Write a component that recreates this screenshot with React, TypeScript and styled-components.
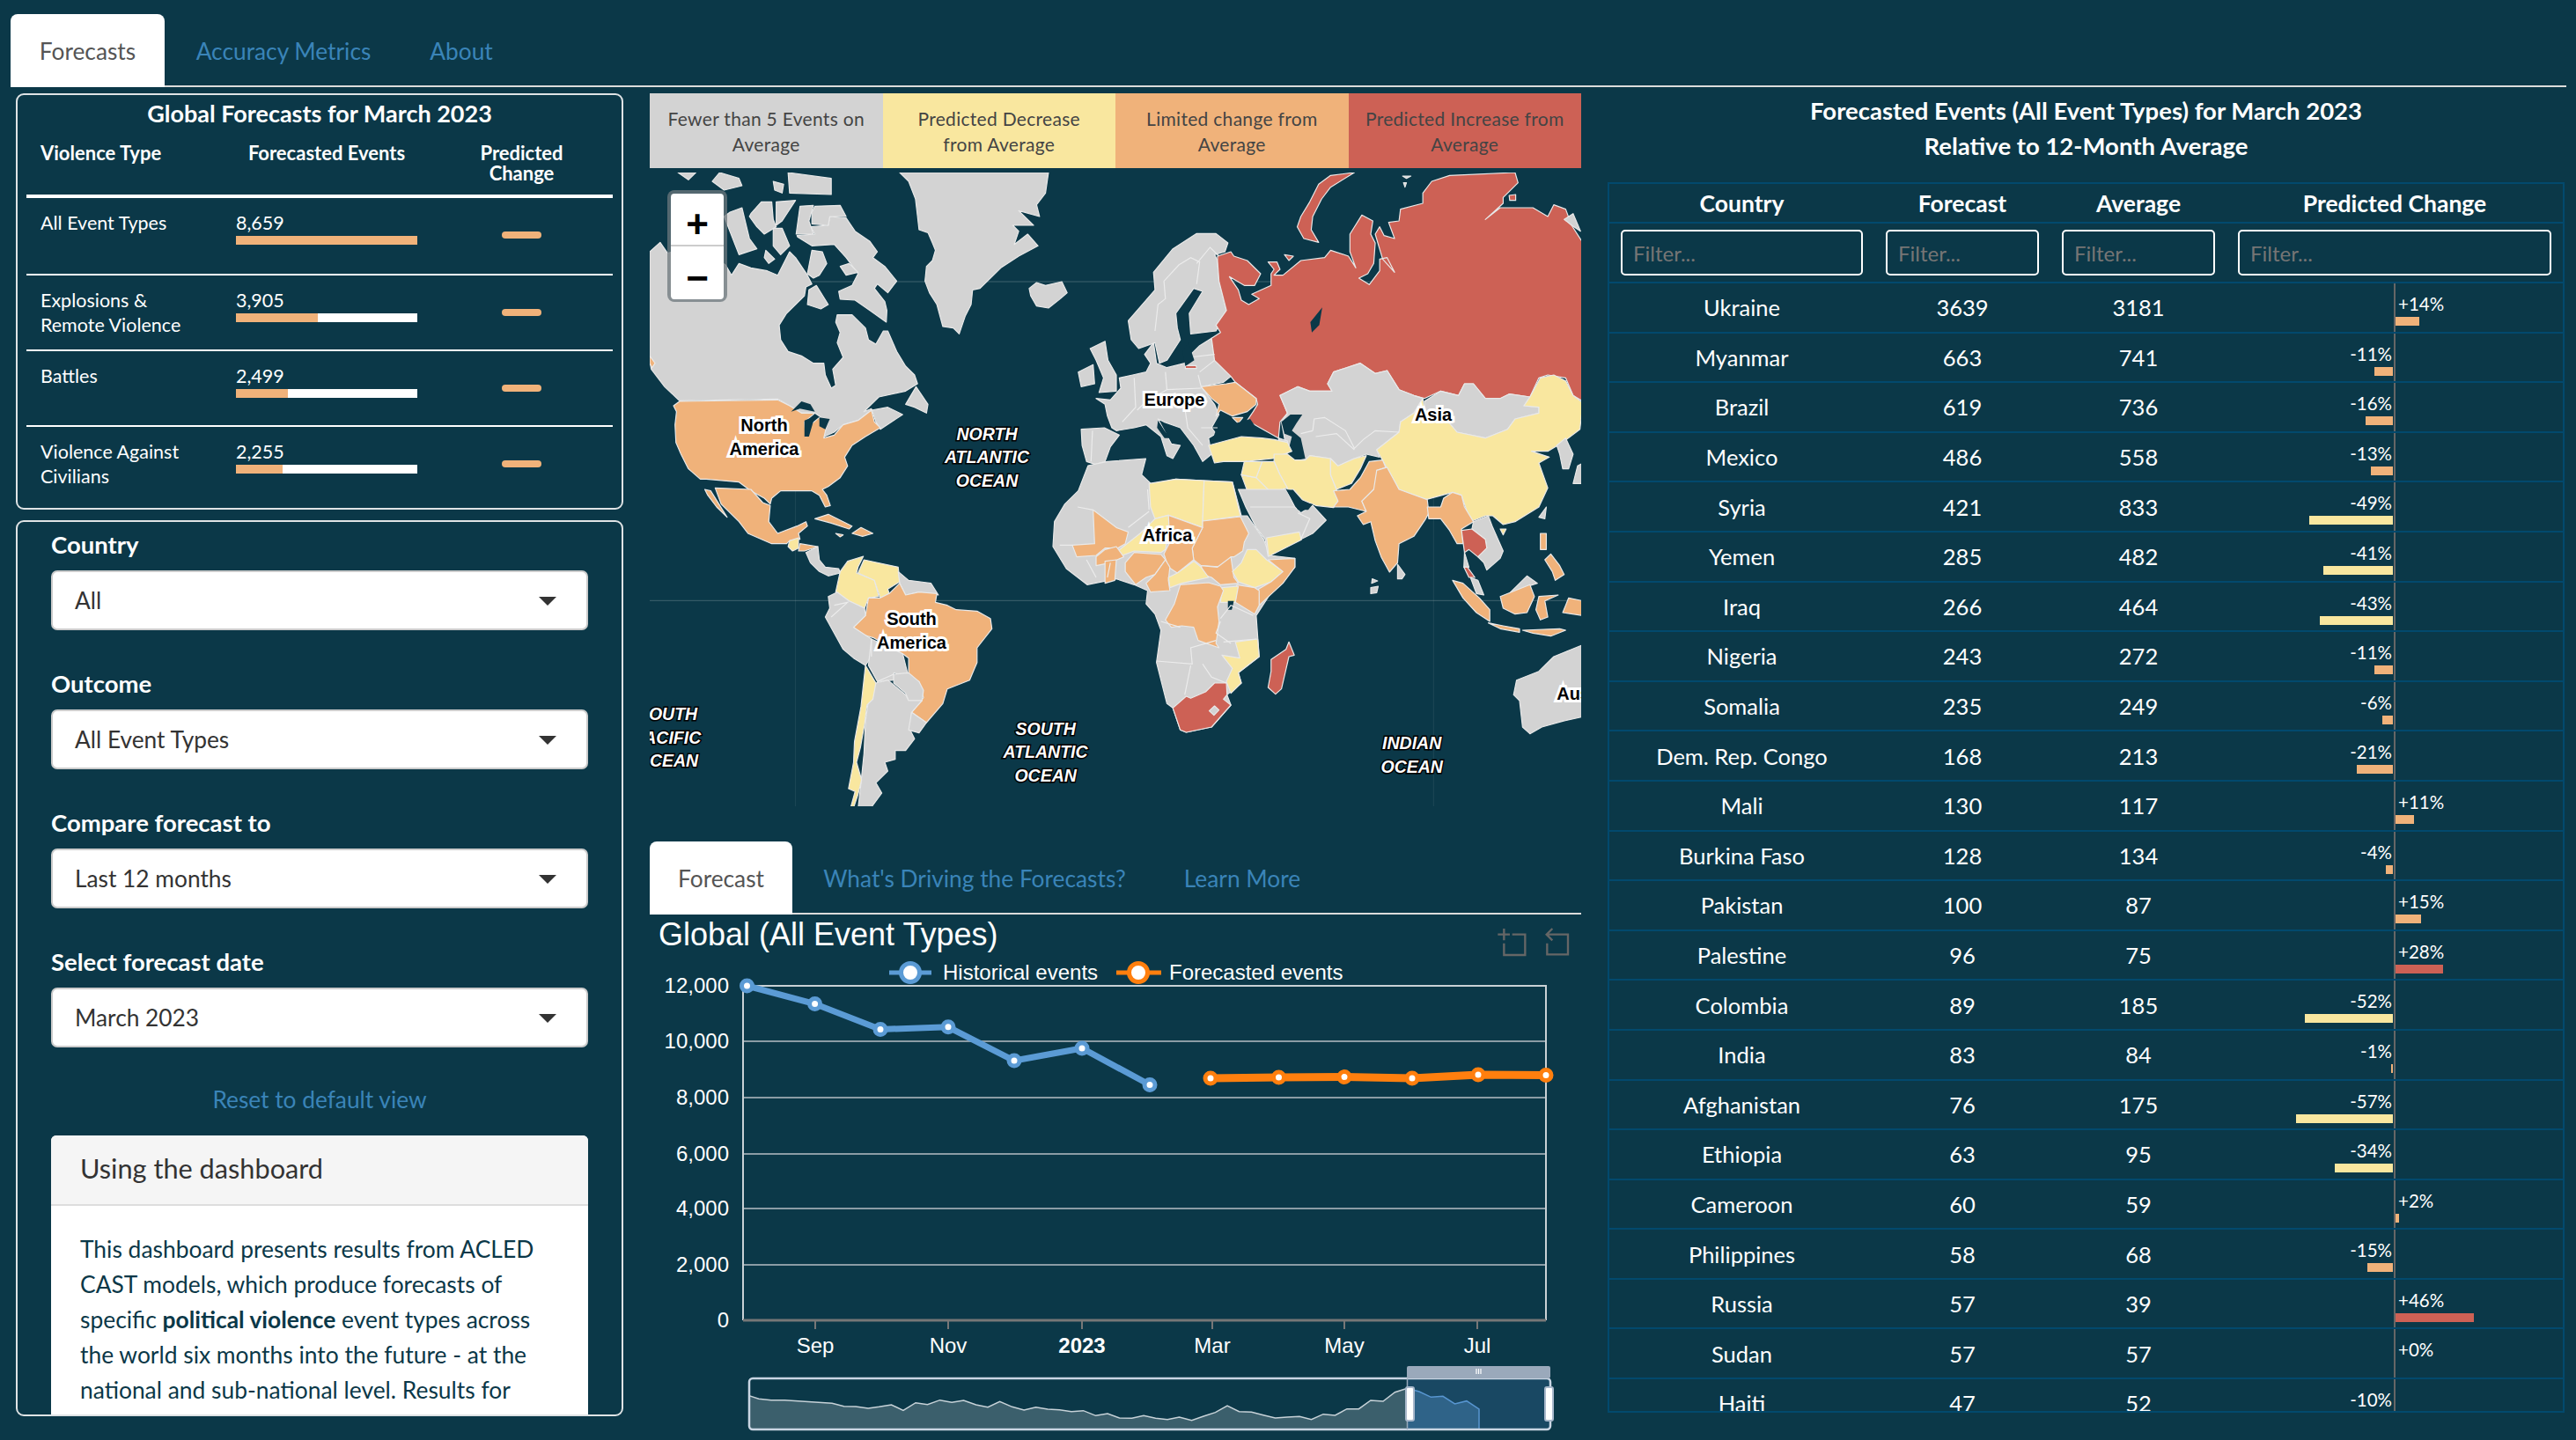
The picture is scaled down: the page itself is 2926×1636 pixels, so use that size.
import React from "react";
import styled, { createGlobalStyle } from "styled-components";

const BG = "#0b3848";
const GREY = "#d3d3d3";
const YEL = "#f9e79f";
const ORG = "#f0b27a";
const RED = "#cd6155";
const UI = 'Lato, "Noto Sans", sans-serif';
const ARIAL = '"Liberation Sans", Arial, sans-serif';

const Global = createGlobalStyle`
  html, body { margin: 0; padding: 0; background: ${BG}; }
  * { box-sizing: border-box; }
`;

const Page = styled.div`
  width: 2926px;
  height: 1636px;
  overflow: hidden;
  padding: 16px 11px 0 12px;
  background: ${BG};
  color: #fff;
  font-family: ${UI};
`;

const TabBar = styled.div`
  display: flex;
  height: ${(p: { $h: number }) => p.$h}px;
  border-bottom: 2px solid #dcdcdc;
`;

const Tab = styled.div<{ $active?: boolean; $w: number }>`
  width: ${(p) => p.$w}px;
  margin-right: 4px;
  display: flex;
  align-items: center;
  justify-content: center;
  white-space: nowrap;
  font-size: 26.3px;
  margin-bottom: -2px;
  border-radius: 8px 8px 0 0;
  color: ${(p) => (p.$active ? "#555" : "#3a84b8")};
  background: ${(p) => (p.$active ? "#fff" : "transparent")};
`;

const Main = styled.div`
  display: grid;
  grid-template-columns: 690px 1058px 1087px;
  column-gap: 30px;
  padding: 7px 0 0 6px;
`;

const Column = styled.div`
  display: flex;
  flex-direction: column;
  min-width: 0;
`;

const Panel = styled.div<{ $h: number }>`
  height: ${(p) => p.$h}px;
  border: 2px solid #dfe3e5;
  border-radius: 9px;
  overflow: hidden;
`;

const SummaryPanel = styled(Panel)`
  padding: 0 10px;
  margin-bottom: 12px;
`;

const SummaryTitle = styled.div`
  height: 44px;
  line-height: 42px;
  text-align: center;
  font-size: 27px;
  font-weight: 700;
`;

const SummaryHead = styled.div`
  display: grid;
  grid-template-columns: 238px 222px 205px;
  padding-top: 10px;
  height: 73px;
  border-bottom: 4px solid #fff;
  font-size: 22px;
  line-height: 23px;
  font-weight: 700;
`;

const HeadCell = styled.div<{ $align?: string }>`
  text-align: ${(p) => p.$align || "left"};
  padding-left: ${(p) => (p.$align ? 0 : 16)}px;
`;

const HeadCellForecast = styled.div`
  width: 206px;
  text-align: center;
  white-space: nowrap;
`;

const SummaryRow = styled.div<{ $h: number }>`
  display: grid;
  grid-template-columns: 238px 222px 205px;
  height: ${(p) => p.$h}px;
  padding-top: 14px;
  border-bottom: 2px solid #fff;
  font-size: 21.5px;
  &:last-child { border-bottom: 0; }
`;

const RowLabel = styled.div`
  padding-left: 16px;
  line-height: 28px;
`;

const RowValue = styled.div`
  line-height: 29px;
`;

const Track = styled.div`
  width: 206px;
  height: 10px;
  background: #fff;
`;

const TrackFill = styled.div`
  height: 100%;
  background: ${ORG};
`;

const DashCell = styled.div`
  display: flex;
  justify-content: center;
  padding-top: 24px;
`;

const Dash = styled.div`
  width: 45px;
  height: 8px;
  border-radius: 4px;
  background: ${ORG};
`;

const FilterPanel = styled(Panel)`
  padding: 11px 38px 0;
`;

const FieldLabel = styled.div`
  height: 30px;
  line-height: 30px;
  margin-bottom: 14px;
  font-size: 27.5px;
  font-weight: 700;
`;

const Select = styled.div`
  position: relative;
  height: 68px;
  margin-bottom: 46px;
  padding-left: 25px;
  line-height: 64px;
  font-size: 26.3px;
  color: #333;
  background: #fff;
  border: 2px solid #ccc;
  border-radius: 7px;
  &::after {
    content: "";
    position: absolute;
    right: 34px;
    top: 28px;
    border-style: solid;
    border-width: 10px 10px 0;
    border-color: #333 transparent transparent;
  }
`;

const ResetLink = styled.div`
  height: 40px;
  margin-top: -7px;
  margin-bottom: 21px;
  line-height: 40px;
  text-align: center;
  font-size: 26.3px;
  color: #3a84b8;
`;

const InfoBox = styled.div`
  background: #fff;
  border-radius: 6px 6px 0 0;
  height: 340px;
  overflow: hidden;
`;

const InfoHead = styled.div`
  height: 80px;
  padding-left: 33px;
  line-height: 76px;
  font-size: 30.7px;
  color: #333;
  background: #f5f5f5;
  border-bottom: 2px solid #ddd;
`;

const InfoBody = styled.div`
  padding: 29px 0 0 33px;
  font-size: 26.4px;
  line-height: 40px;
  color: #0b3848;
  white-space: nowrap;
  b { font-weight: 700; }
`;

const LegendBar = styled.div`
  display: grid;
  grid-template-columns: repeat(4, 1fr);
  height: 85px;
  margin-bottom: 5px;
`;

const LegendCell = styled.div<{ $bg: string }>`
  display: flex;
  align-items: center;
  justify-content: center;
  text-align: center;
  background: ${(p) => p.$bg};
  font-size: 21px;
  line-height: 29px;
  letter-spacing: 0.3px;
  color: #444;
`;

const MapBox = styled.div`
  position: relative;
  height: 720px;
  overflow: hidden;
  background: ${BG};
  margin-bottom: 40px;
`;

const MapSvg = styled.svg`
  display: block;
  width: 1060px;
  height: 720px;
`;

const ZoomControl = styled.div`
  position: absolute;
  left: 20px;
  top: 20px;
  width: 68px;
  height: 127px;
  padding: 4px;
  border-radius: 8px;
  background: rgba(110, 120, 125, 0.75);
`;

const ZoomBtn = styled.div`
  display: flex;
  align-items: center;
  justify-content: center;
  width: 60px;
  height: 60px;
  padding-top: 12px;
  background: #fff;
  color: #000;
  font-family: ${ARIAL};
  font-size: 44px;
  font-weight: 700;
  &:first-child { border-bottom: 2px solid #ccc; border-radius: 4px 4px 0 0; }
  &:last-child { border-radius: 0 0 4px 4px; }
`;

const MapLabel = styled.div<{ $x: number; $y: number; $ocean?: boolean }>`
  position: absolute;
  left: ${(p) => p.$x - 738}px;
  top: ${(p) => p.$y - 196}px;
  transform: translate(-50%, -50%);
  text-align: center;
  white-space: nowrap;
  font-family: ${ARIAL};
  font-size: ${(p) => (p.$ocean ? 19.5 : 20)}px;
  line-height: ${(p) => (p.$ocean ? 26.5 : 27)}px;
  font-weight: 700;
  font-style: ${(p) => (p.$ocean ? "italic" : "normal")};
  color: ${(p) => (p.$ocean ? "#fff" : "#000")};
  -webkit-text-stroke: ${(p) => (p.$ocean ? "3px #000" : "6px #fff")};
  paint-order: stroke fill;
  stroke-linejoin: round;
`;

const ChartSvg = styled.svg`
  display: block;
  width: 1058px;
  height: 597px;
  font-family: ${ARIAL};
`;

const TableTitle = styled.div`
  height: 81px;
  margin-bottom: 20px;
  text-align: center;
  font-size: 27.5px;
  font-weight: 700;
  line-height: 40px;
`;

const TableBox = styled.div`
  height: 1398px;
  overflow: hidden;
  border: 2px solid #02496d;
`;

const GridRow = styled.div<{ $h: number }>`
  display: grid;
  grid-template-columns: 301px 200px 200px 1fr;
  height: ${(p) => p.$h}px;
  border-bottom: 2px solid #02496d;
  align-items: stretch;
`;

const HeadTh = styled.div`
  display: flex;
  align-items: center;
  justify-content: center;
  font-size: 26.5px;
  font-weight: 700;
`;

const FilterCell = styled.div`
  display: flex;
  align-items: center;
  padding: 0 13px;
`;

const FilterInput = styled.input`
  width: 100%;
  height: 52px;
  padding: 0 12px;
  font: 24px ${UI};
  color: #fff;
  background: transparent;
  border: 2px solid #fff;
  border-radius: 5px;
  &::placeholder { color: #757575; opacity: 1; }
`;

const Td = styled.div`
  display: flex;
  align-items: center;
  justify-content: center;
  font-size: 25.5px;
`;

const ChangeCell = styled.div`
  display: grid;
  grid-template-columns: 190px 1fr;
  font-size: 20.5px;
`;

const ChangeSide = styled.div<{ $right?: boolean }>`
  display: flex;
  flex-direction: column;
  align-items: ${(p) => (p.$right ? "flex-start" : "flex-end")};
  padding-top: 11px;
  border-left: ${(p) => (p.$right ? "2px solid #666" : "0")};
  padding-right: ${(p) => (p.$right ? 0 : 1)}px;
`;

const ChangeText = styled.div<{ $right?: boolean }>`
  line-height: 24px;
  height: 27px;
  padding: 0 ${(p) => (p.$right ? 0 : 1)}px 0 ${(p) => (p.$right ? 3 : 0)}px;
`;

const ChangeBar = styled.div<{ $c: string }>`
  height: 10px;
  background: ${(p) => p.$c};
`;

type Shape = [string, string];
const NW: Shape[] = [
  [GREY, "840,0 870,30 893,90 900,150 905,195 935,205 950,240 960,265 950,300 930,320 925,370 940,410 965,450 985,525 1020,530 1040,550 1060,490 1080,450 1085,400 1110,395 1180,325 1240,285 1305,250 1270,210 1225,245 1240,200 1220,180 1290,180 1240,130 1310,150 1300,110 1330,70 1340,0"],
  [GREY, "1275,395 1300,375 1330,385 1385,372 1403,410 1380,430 1340,462 1300,455 1280,420"],
  [GREY, "0,270 35,238 60,275 150,250 255,315 275,350 300,310 340,325 395,335 430,350 470,270 490,290 530,350 545,380 525,390 520,420 490,450 460,480 435,520 440,570 465,610 510,625 550,650 585,650 590,690 610,735 625,725 615,670 650,630 630,580 640,545 625,510 630,485 680,485 725,530 735,570 760,585 785,540 800,540 830,610 860,660 890,690 900,720 860,745 770,765 720,815 745,805 760,850 775,875 850,825 800,800 745,810 700,845 650,860 620,885 575,905 600,850 570,830 555,820 510,820 470,795 430,772 100,778 50,730 5,670 0,640"],
  [ORG, "100,780 430,775 470,795 510,820 555,820 520,850 525,900 540,860 570,835 600,840 585,905 620,895 650,860 700,845 745,810 755,850 775,870 725,900 680,930 655,970 665,1000 640,1040 600,1070 580,1080 595,1100 607,1135 590,1140 570,1100 545,1085 500,1085 440,1085 410,1110 405,1130 385,1110 340,1085 300,1055 190,1045 170,1045 130,1010 105,960 88,920 85,860 90,815 80,795"],
  [ORG, "0,625 18,650 8,665 0,650"],
  [BG, "475,815 510,780 540,790 555,815 505,805"],
  [BG, "520,845 555,830 535,900 520,900"],
  [BG, "570,835 605,840 590,875 570,865"],
  [GREY, "860,790 895,730 935,790 930,820 890,800"],
  [GREY, "497,220 545,250 620,245 660,290 700,345 680,385 635,405 640,432 690,435 740,470 795,510 797,470 790,440 755,395 765,380 800,410 830,370 790,320 750,290 765,270 740,235 690,200 660,155 605,150 600,180 540,185 555,210 495,215"],
  [GREY, "505,115 550,112 535,165 550,210 492,210"],
  [GREY, "555,115 640,112 660,150 605,150 600,180 545,175 545,135"],
  [GREY, "465,0 610,20 610,75 470,70"],
  [GREY, "415,30 450,40 445,70 420,60"],
  [GREY, "235,0 300,20 310,45 250,60 210,30"],
  [GREY, "95,0 155,0 130,25"],
  [GREY, "340,140 375,100 410,100 415,160 425,185 385,210 360,185 335,150"],
  [GREY, "425,100 490,95 445,165 425,180"],
  [GREY, "270,135 310,120 335,225 360,260 300,280 250,150"],
  [GREY, "415,190 445,190 470,250 440,280 415,250"],
  [GREY, "390,265 420,295 400,310 385,290"],
  [GREY, "545,265 580,270 595,310 570,350 550,360 530,345"],
  [GREY, "535,400 560,385 600,450 575,465 530,450"],
  [GREY, "640,320 670,310 700,340 660,350"],
  [GREY, "1440,680 1490,655 1495,720 1450,730"],
  [GREY, "1480,600 1530,575 1540,640 1568,690 1568,745 1510,750 1525,700 1500,640"],
];
const NE: Shape[] = [
  [GREY, "-68,770 -20,775 15,735 10,700 55,690 100,680 115,650 95,620 125,580 135,650 170,665 230,650 250,620 280,590 320,565 330,640 385,695 360,715 285,730 330,790 345,825 320,870 335,890 310,905 320,960 290,985 260,930 215,870 160,850 140,840 185,925 215,930 190,975 170,965 150,900 100,860 60,870 0,880 -15,870 -30,830 -38,790"],
  [GREY, "-118,875 -40,870 10,895 -20,935 -38,985 -70,995 -100,985 -115,930"],
  [GREY, "40,505 130,400 125,340 190,260 270,208 335,208 375,240 365,270 330,280 340,300 345,370 370,470 335,540 250,550 245,480 290,405 260,395 200,480 205,530 215,570 170,640 145,650 130,580 75,600 50,570"],
  [RED, "340,285 385,270 395,285 440,300 485,345 465,385 430,385 380,355 410,400 420,435 445,450 480,430 455,415 520,385 520,345 530,330 510,305 540,305 550,330 530,350 560,350 620,300 700,290 720,265 780,285 805,325 785,270 785,210 825,145 862,165 855,210 870,240 865,310 845,345 815,360 850,382 885,335 885,295 910,290 935,340 895,295 870,210 885,185 900,215 935,225 915,170 950,165 955,125 1030,105 1030,70 1060,30 1120,10 1340,0 1350,35 1300,85 1300,105 1240,160 1290,120 1345,120 1400,120 1450,150 1470,110 1510,125 1530,180 1568,240 1568,780 1535,760 1510,700 1450,690 1420,700 1390,765 1320,755 1290,770 1240,770 1200,720 1170,720 1150,760 1090,745 1035,770 1000,760 950,740 910,675 870,685 820,650 730,680 710,720 725,745 650,745 610,730 550,760 575,820 550,850 545,905 500,880 440,845 460,815 475,790 470,770 400,715 385,695 330,640 320,565 350,545 335,520 370,470 345,370 340,300"],
  [RED, "800,0 720,10 680,40 650,100 620,150 608,185 630,225 680,238 655,195 660,150 690,90 720,50"],
  [RED, "565,280 595,285 580,300"],
  [RED, "1320,78 1342,75 1342,95 1322,95"],
  [RED, "232,658 268,658 270,668 232,668"],
  [GREY, "962,12 990,12 975,20"],
  [GREY, "965,35 975,35 970,50"],
  [GREY, "1505,160 1535,140 1560,200 1530,180"],
  [ORG, "285,730 370,720 400,715 470,770 470,790 440,815 390,830 350,810 335,830 345,790 320,770"],
  [ORG, "390,835 425,835 410,855"],
  [BG, "325,905 345,850 370,825 400,855 450,840 470,870 490,905 460,915 410,900 370,905"],
  [GREY, "550,760 610,730 650,745 725,745 710,720 730,680 820,650 870,685 910,675 950,740 1000,760 1030,770 1000,820 955,850 950,885 875,945 885,970 840,960 800,975 745,1000 720,975 650,965 635,980 600,980 575,960 555,850 575,820"],
  [GREY, "545,905 575,915 575,960 550,940"],
  [BG, "555,850 585,825 625,825 605,855 590,880 620,905 635,975 600,982 575,960 590,900 565,890"],
  [GREY, "1035,780 1090,745 1150,760 1170,720 1200,720 1240,770 1290,770 1320,755 1390,765 1370,795 1420,800 1420,820 1340,840 1315,875 1240,905 1145,885 1120,855 1040,835"],
  [YEL, "1425,700 1470,690 1510,710 1535,760 1568,785 1558,875 1500,920 1450,950 1395,950 1455,970 1420,990 1450,1075 1420,1140 1340,1190 1300,1200 1265,1170 1240,1170 1190,1190 1160,1100 1130,1090 1040,1115 950,1080 905,1000 875,945 950,885 955,850 1000,820 1030,770 1040,835 1120,855 1145,885 1240,905 1315,875 1340,840 1420,820 1420,800 1370,795 1390,765"],
  [GREY, "1480,930 1510,905 1535,960 1520,1010 1500,1010 1490,960"],
  [GREY, "1550,1000 1568,990 1568,1060 1535,1060"],
  [YEL, "310,930 420,900 490,905 530,910 575,920 590,950 525,975 430,985 360,985 330,990"],
  [YEL, "420,1030 470,1040 520,1090 440,1085"],
  [YEL, "530,960 575,960 600,980 635,980 650,965 720,975 720,1030 740,1080 745,1120 730,1142 670,1135 625,1115 595,1080 575,1080 550,1030 530,985"],
  [YEL, "490,985 530,985 550,1030 575,1075 520,1090 470,1040"],
  [YEL, "430,985 490,985 470,1040 420,1030"],
  [YEL, "720,975 745,1000 800,975 840,965 820,1010 790,1060 740,1080 720,1030"],
  [ORG, "785,1080 820,1040 850,985 895,980 905,1005 875,1015 880,1060 865,1080 825,1120 840,1155 780,1140 730,1140 745,1120 730,1085"],
  [ORG, "875,1015 910,1005 950,1080 1045,1115 1050,1160 1040,1180 1000,1240 950,1265 945,1330 918,1362 890,1310 870,1255 855,1190 830,1200 810,1170 840,1155 825,1120 865,1080"],
];
const SW: Shape[] = [
  [ORG, "220,-5 340,0 380,45 405,55 400,110 430,150 495,125 525,110 530,125 500,150 505,170 470,175 460,185 410,185 330,150 300,110 240,50"],
  [ORG, "185,0 205,5 260,95 225,60 195,20"],
  [YEL, "470,175 500,165 500,200 480,210 465,195"],
  [ORG, "505,185 565,195 520,210 500,210"],
  [GREY, "525,215 565,195 570,240 590,265 635,270 640,285 600,295 570,280 540,250"],
  [ORG, "555,100 600,85 680,125 670,135 610,115"],
  [ORG, "680,150 710,130 750,150 715,160"],
  [ORG, "625,150 650,155 640,162"],
  [YEL, "718,228 700,265 695,285 755,310 770,365 735,370 722,405 670,380 625,350 640,280 665,245"],
  [YEL, "720,240 835,265 840,315 800,340 805,355 775,370 755,310 700,285"],
  [GREY, "835,280 870,310 910,315 945,320 970,360 905,350 860,360 840,320"],
  [ORG, "840,320 860,360 905,350 965,355 960,385 1000,395 1030,410 1100,415 1145,440 1150,475 1100,540 1100,590 1075,650 1000,680 985,730 930,795 880,760 920,710 905,655 870,640 870,575 850,560 750,505 715,495 685,470 725,430 735,370 775,370 805,355"],
  [GREY, "600,365 630,350 670,380 722,405 725,430 685,470 745,510 745,570 725,600 685,575 650,545 590,435 605,405"],
  [GREY, "745,510 850,560 870,640 820,625 820,650 765,655 735,600"],
  [GREY, "820,630 870,625 905,655 920,685 915,720 870,720 860,695 820,660"],
  [GREY, "760,660 800,650 860,700 870,720 915,720 880,760 875,820 890,850 860,890 825,890 825,920 790,930 800,960 760,1000 780,1035 740,1090 700,1090 710,1000 720,900 725,790 735,720"],
  [GREY, "880,760 930,795 905,830 870,820"],
  [YEL, "725,600 760,660 750,715 730,735 722,800 708,880 695,930 712,990 700,1040 685,1085 675,1085 690,1030 668,1020 685,930 688,860 710,740"],
];
const SE: Shape[] = [
  [GREY, "-95,-81 -30,-95 99,-105 85,-50 120,-16 200,-35 295,-30 390,-25 415,70 420,90 440,90 495,170 515,225 600,235 600,265 515,360 470,430 480,570 410,625 420,660 372,700 385,735 320,810 235,828 215,820 190,745 170,730 135,590 150,480 130,425 100,390 105,345 60,325 0,305 -98,325 -168,270 -213,195 -208,110 -173,50 -128,5"],
  [YEL, "110,-20 200,-35 295,-30 290,130 175,88 130,100 115,60"],
  [YEL, "295,-30 390,-25 417,90 290,108"],
  [YEL, "5,210 80,150 130,100 175,88 180,110 165,205 150,215 60,210 20,225"],
  [ORG, "290,108 417,93 445,150 430,180 425,210 395,230 385,230 365,265 285,260 260,240 255,200 290,130"],
  [ORG, "175,88 290,130 255,200 260,240 205,285 175,265 160,220 180,180"],
  [ORG, "-78,70 0,130 40,145 30,185 5,200 -38,200 -68,225 -133,230 -148,190 -73,185"],
  [ORG, "-68,230 -38,205 0,195 25,230 -20,250 -68,260"],
  [ORG, "-38,245 0,240 -5,310 -38,320"],
  [ORG, "30,250 60,215 150,222 165,240 130,290 100,300 65,325 30,280"],
  [ORG, "130,290 165,240 180,265 175,310 180,345 115,350 100,320"],
  [ORG, "285,260 340,265 385,230 395,300 410,320 350,325 320,300 290,290"],
  [YEL, "175,300 205,285 260,245 285,265 310,300 220,320 180,335"],
  [YEL, "440,205 470,205 505,240 560,280 520,315 465,335 410,315 390,280 420,250"],
  [ORG, "510,240 600,235 600,265 560,320 480,395 478,340 520,315 560,280"],
  [ORG, "405,325 465,335 480,345 480,395 465,425 400,385"],
  [YEL, "355,335 410,330 400,385 350,385"],
  [ORG, "215,325 310,318 350,330 360,345 340,400 345,450 340,490 335,525 345,540 275,515 260,470 220,465 185,470 165,445 195,390"],
  [YEL, "475,510 480,570 410,625 420,660 385,695 370,655 390,610 355,565 415,575 400,520"],
  [RED, "190,745 235,705 250,712 300,690 330,660 370,660 372,700 360,715 385,735 320,810 235,828 215,820"],
  [GREY, "312,755 330,738 345,752 328,770"],
  [RED, "580,520 598,565 580,570 555,680 535,698 510,675 520,620 520,580 570,545"],
  [GREY, "410,0 520,0 570,0 600,60 620,80 660,55 705,105 660,150 620,170 510,228 500,170 470,130 435,60"],
  [YEL, "505,165 615,145 622,172 512,228"],
  [BG, "570,0 595,5 620,45 660,50 645,70 610,70"],
  [ORG, "1130,10 1160,20 1170,60 1200,110 1160,135 1165,185 1145,185 1120,140 1090,100 1050,100 1045,60 1090,60 1100,30"],
  [GREY, "1200,110 1250,90 1265,130 1300,210 1290,235 1245,275 1235,250 1215,230 1245,200 1240,170 1195,135"],
  [RED, "1160,140 1195,135 1240,170 1245,200 1215,230 1185,205 1170,215"],
  [GREY, "1170,215 1185,265 1168,265"],
  [RED, "1168,265 1180,265 1205,300 1185,300"],
  [GREY, "1190,300 1215,310 1235,360 1210,355"],
  [GREY, "1320,355 1380,295 1415,320 1385,330"],
  [ORG, "1290,365 1390,325 1405,365 1380,420 1340,425 1300,405"],
  [ORG, "1130,310 1165,320 1220,370 1255,410 1255,450 1210,420 1165,370"],
  [ORG, "1250,455 1300,465 1355,475 1355,487 1290,475"],
  [ORG, "1365,480 1490,475 1510,480 1460,500 1400,490"],
  [ORG, "1420,365 1485,360 1440,380 1450,435 1425,445 1410,410"],
  [ORG, "1425,150 1445,150 1445,205 1425,205"],
  [ORG, "1460,220 1490,260 1505,290 1475,310 1465,280 1440,240"],
  [ORG, "1520,370 1568,380 1568,430 1500,420"],
  [YEL, "1290,135 1310,135 1300,155"],
  [GREY, "1445,60 1440,100 1420,95"],
  [GREY, "945,255 970,290 960,305 945,305"],
  [GREY, "1568,530 1568,775 1500,790 1430,810 1390,833 1365,810 1355,720 1335,700 1345,650 1420,620 1440,600 1470,570 1530,545"],
  [GREY, "855,335 880,330 875,352 855,355"],
  [GREY, "860,305 878,312 858,320"],
  [BG, "375,380 395,380 388,410 375,410"],
];
const BorderLines: { o: [number, number]; d: string }[] = [
  { o: [1568, 0], d: "M60,700 65,800 20,850 M165,680 170,740 100,780 70,810 M275,690 285,730 M280,680 330,640 M245,630 330,620 M170,740 285,735 M230,800 240,870 290,930 M285,870 340,870 M130,540 140,450 165,430 160,370 210,315 250,290 280,305 270,380 M270,310 315,255 345,285 M660,880 665,840 700,835 770,880 800,940 830,910 870,880 950,885 M620,890 660,880 M670,900 740,890 800,945 M-80,880 -85,985" },
  { o: [1568, 1080], d: "M105,0 110,70 M40,130 110,75 M135,585 255,595 250,540 335,515 M250,600 230,700 M290,595 320,640 370,660 M385,525 335,490 350,450 M360,520 470,510 M350,440 385,395 460,430 M-78,70 -130,60 M-148,190 -190,190 M-100,240 -68,300 M-20,250 -30,300 M150,450 215,470 M620,170 650,100 610,80 M450,60 600,60" },
  { o: [0, 1080], d: "M620,395 665,385 610,435 M745,510 745,570 M820,630 765,655" },
];
const polys = (shapes: Shape[], o: [number, number]) => (
  <g transform={`translate(${o[0]},${o[1]})`}>
    {shapes.map(([c, p], i) => (
      <polygon key={i} points={p} fill={c} stroke={c === BG ? "none" : "#e9e9e9"} strokeWidth={3.5} strokeLinejoin="round" />
    ))}
  </g>
);

const WorldMap = () => (
  <MapSvg viewBox="0 0 3136 2160" preserveAspectRatio="none" aria-hidden="true">
    <g stroke="#fff" strokeOpacity={0.32} strokeWidth={2} fill="none">
      <path d="M0,372 H3136 M0,1459 H3136" />
      <path d="M490,1080 V2160 M2634,196 V2160" strokeOpacity={0.12} />
    </g>
    {polys(NW, [0, 0])}
    {polys(NE, [1568, 0])}
    {polys(SW, [0, 1080])}
    {polys(SE, [1568, 1080])}
    {BorderLines.map((b, i) => (
      <path key={i} transform={`translate(${b.o[0]},${b.o[1]})`} d={b.d} fill="none" stroke="#ececec" strokeWidth={3.5} />
    ))}
    <path fill={BG} d="M1708,845 1730,880 1750,905 1730,905 1705,870 Z" />
    <path fill={BG} d="M1810,580 1830,640 1800,660 1790,610 Z M2260,460 2220,510 2225,545 2250,520 Z" />
  </MapSvg>
);

const LEGEND: [string, string, string][] = [
  [GREY, "Fewer than 5 Events on", "Average"],
  [YEL, "Predicted Decrease", "from Average"],
  [ORG, "Limited change from", "Average"],
  [RED, "Predicted Increase from", "Average"],
];

const SUMMARY: [string[], string, number, number][] = [
  [["All Event Types"], "8,659", 100, 88],
  [["Explosions &", "Remote Violence"], "3,905", 45, 86],
  [["Battles"], "2,499", 28.7, 86],
  [["Violence Against", "Civilians"], "2,255", 25.8, 86],
];

const ROWS: [string, number, number, number, string | null][] = [
  ["Ukraine", 3639, 3181, 14, ORG],
  ["Myanmar", 663, 741, -11, ORG],
  ["Brazil", 619, 736, -16, ORG],
  ["Mexico", 486, 558, -13, ORG],
  ["Syria", 421, 833, -49, YEL],
  ["Yemen", 285, 482, -41, YEL],
  ["Iraq", 266, 464, -43, YEL],
  ["Nigeria", 243, 272, -11, ORG],
  ["Somalia", 235, 249, -6, ORG],
  ["Dem. Rep. Congo", 168, 213, -21, ORG],
  ["Mali", 130, 117, 11, ORG],
  ["Burkina Faso", 128, 134, -4, ORG],
  ["Pakistan", 100, 87, 15, ORG],
  ["Palestine", 96, 75, 28, RED],
  ["Colombia", 89, 185, -52, YEL],
  ["India", 83, 84, -1, ORG],
  ["Afghanistan", 76, 175, -57, YEL],
  ["Ethiopia", 63, 95, -34, YEL],
  ["Cameroon", 60, 59, 2, ORG],
  ["Philippines", 58, 68, -15, ORG],
  ["Russia", 57, 39, 46, RED],
  ["Sudan", 57, 57, 0, null],
  ["Haiti", 47, 52, -10, ORG],
];

const BLUE = "#5b9bd5";
const ORANGE = "#ff7f0e";
const bluePts: [number, number][] = [[848.5, 1120], [925.6, 1140.6], [1000, 1169.5], [1077, 1166.8], [1152, 1205], [1229, 1191], [1306, 1232.5]];
const orgPts: [number, number][] = [[1375, 1225], [1452.5, 1224], [1527, 1223.6], [1604, 1225], [1679, 1221], [1756, 1221.4]];
const miniPts = "34,257 52,268 75,272 100,272 150,278 188,283 210,293 232,294 255,300 275,295 298,288 320,307 343,281 365,287 388,272 410,280 432,273 455,288 477,296 499,277 522,295 544,306 566,296 588,303 610,305 632,311 654,308 677,325 699,318 721,333 744,334 766,325 788,334 810,338 832,330 855,341 877,327 899,314 921,291 943,311 966,313 988,323 1010,333 1032,330 1055,328 1077,338 1099,320 1121,324 1143,302 1165,302 1187,273 1210,276 1232,245 1255,232";
const miniBlue = "1255,232 1277,243 1299,262 1321,259 1343,285 1365,275 1388,303";

const Chart = () => (
  <ChartSvg viewBox="738 1039 1058 597" aria-label="Global forecast chart">
    <text x={748} y={1074} fontSize={36} fill="#fff">Global (All Event Types)</text>
    <g transform="translate(1680,1040) scale(.3333)" fill="none" stroke="#666" strokeWidth={7}>
      <path d="M85,45 V85 M64,65 H105 M113,65 H157 V135 H85 V95" />
      <path d="M250,45 L230,65 L250,85 M232,65 H303 V133 H232 V95" />
    </g>
    <g fontSize={24} fill="#fff">
      <line x1={1010} y1={1105} x2={1058} y2={1105} stroke={BLUE} strokeWidth={5} />
      <circle cx={1034} cy={1105} r={10.5} fill="#fff" stroke={BLUE} strokeWidth={5} />
      <text x={1071} y={1113}>Historical events</text>
      <line x1={1268} y1={1105} x2={1319} y2={1105} stroke={ORANGE} strokeWidth={5} />
      <circle cx={1293} cy={1105} r={10.5} fill="#fff" stroke={ORANGE} strokeWidth={5} />
      <text x={1328} y={1113}>Forecasted events</text>
    </g>
    {[1183, 1247, 1311, 1373, 1437].map((y) => (
      <line key={y} x1={844} x2={1756} y1={y} y2={y} stroke="#8b9ca5" strokeWidth={2} />
    ))}
    <path d="M844,1500 V1120 H1756 V1500" fill="none" stroke="#c9d1d5" strokeWidth={2} />
    <line x1={844} x2={1756} y1={1500} y2={1500} stroke="#777" strokeWidth={3} />
    <g fontSize={24} fill="#fff" textAnchor="end">
      {[["12,000", 1120], ["10,000", 1183], ["8,000", 1247], ["6,000", 1311], ["4,000", 1373], ["2,000", 1437], ["0", 1500]].map(([t, y]) => (
        <text key={t as string} x={828} y={(y as number) + 8}>{t}</text>
      ))}
    </g>
    <g fontSize={24} fill="#fff" textAnchor="middle">
      {[["Sep", 926], ["Nov", 1077], ["2023", 1229], ["Mar", 1377], ["May", 1527], ["Jul", 1678]].map(([t, x]) => (
        <g key={t as string}>
          <line x1={x as number} x2={x as number} y1={1501} y2={1510} stroke="#777" strokeWidth={2} />
          <text x={x as number} y={1537} fontWeight={t === "2023" ? 700 : 400}>{t}</text>
        </g>
      ))}
    </g>
    <polyline points={bluePts.map((p) => p.join(",")).join(" ")} fill="none" stroke={BLUE} strokeWidth={7} />
    {bluePts.map(([x, y]) => (
      <circle key={x} cx={x} cy={y} r={6} fill="#fff" stroke={BLUE} strokeWidth={5} />
    ))}
    <polyline points={orgPts.map((p) => p.join(",")).join(" ")} fill="none" stroke={ORANGE} strokeWidth={9} />
    {orgPts.map(([x, y]) => (
      <circle key={x} cx={x} cy={y} r={6} fill="#fff" stroke={ORANGE} strokeWidth={5} />
    ))}
    <g transform="translate(830,1500) scale(.6124,.3333)">
      <polygon points={`${miniPts} 1255,372 34,372`} fill="#fff" fillOpacity={0.2} />
      <polyline points={miniPts} fill="none" stroke="#c7d2d8" strokeWidth={1.5} vectorEffect="non-scaling-stroke" />
      <polygon points={`${miniBlue} 1388,372 1255,372`} fill={BLUE} fillOpacity={0.35} />
      <polyline points={`${miniBlue} 1388,372`} fill="none" stroke={BLUE} strokeWidth={1.5} vectorEffect="non-scaling-stroke" />
    </g>
    <rect x={1598} y={1566} width={163} height={58} fill="#4f86c6" fillOpacity={0.22} />
    <rect x={851} y={1566} width={910} height={58} rx={4} fill="none" stroke="#c9d5e3" strokeWidth={2.5} />
    <line x1={1598.5} x2={1598.5} y1={1566} y2={1624} stroke="#9aabbb" strokeWidth={1.5} />
    <rect x={1598} y={1552} width={163} height={14} rx={2} fill="#9aa9bb" />
    <path d="M1677,1555 v6 M1679.5,1555 v6 M1682,1555 v6" stroke="#fff" strokeWidth={1.2} />
    <rect x={1597} y={1576} width={9} height={38} rx={2} fill="#fff" stroke="#a9b8cb" strokeWidth={2} />
    <rect x={1755} y={1576} width={9} height={38} rx={2} fill="#fff" stroke="#a9b8cb" strokeWidth={2} />
  </ChartSvg>
);

const MAP_LABELS: { x: number; y: number; t: string[]; ocean?: boolean }[] = [
  { x: 868, y: 496.5, t: ["North", "America"] },
  { x: 1334, y: 454, t: ["Europe"] },
  { x: 1628, y: 471, t: ["Asia"] },
  { x: 1326, y: 608, t: ["Africa"] },
  { x: 1035.5, y: 716.5, t: ["South", "America"] },
  { x: 1811, y: 788, t: ["Australia"] },
  { x: 1121, y: 519.5, t: ["NORTH", "ATLANTIC", "OCEAN"], ocean: true },
  { x: 1187.6, y: 854.5, t: ["SOUTH", "ATLANTIC", "OCEAN"], ocean: true },
  { x: 1603.7, y: 857, t: ["INDIAN", "OCEAN"], ocean: true },
  { x: 758, y: 838, t: ["SOUTH", "PACIFIC", "OCEAN"], ocean: true },
];

export default function App() {
  return (
    <Page>
      <Global />
      <TabBar $h={83}>
        <Tab $active $w={175}>Forecasts</Tab>
        <Tab $w={262}>Accuracy Metrics</Tab>
        <Tab $w={134}>About</Tab>
      </TabBar>
      <Main>
        <Column>
          <SummaryPanel $h={473}>
            <SummaryTitle>Global Forecasts for March 2023</SummaryTitle>
            <SummaryHead>
              <HeadCell>Violence Type</HeadCell>
              <HeadCellForecast>Forecasted Events</HeadCellForecast>
              <HeadCell $align="center">Predicted<br />Change</HeadCell>
            </SummaryHead>
            {SUMMARY.map(([label, value, pct, h]) => (
              <SummaryRow key={value} $h={h}>
                <RowLabel>{label.map((l) => <div key={l}>{l}</div>)}</RowLabel>
                <RowValue>
                  {value}
                  <Track><TrackFill style={{ width: `${pct}%` }} /></Track>
                </RowValue>
                <DashCell><Dash /></DashCell>
              </SummaryRow>
            ))}
          </SummaryPanel>
          <FilterPanel $h={1018}>
            <FieldLabel>Country</FieldLabel>
            <Select>All</Select>
            <FieldLabel>Outcome</FieldLabel>
            <Select>All Event Types</Select>
            <FieldLabel>Compare forecast to</FieldLabel>
            <Select>Last 12 months</Select>
            <FieldLabel>Select forecast date</FieldLabel>
            <Select>March 2023</Select>
            <ResetLink>Reset to default view</ResetLink>
            <InfoBox>
              <InfoHead>Using the dashboard</InfoHead>
              <InfoBody>
                This dashboard presents results from ACLED<br />
                CAST models, which produce forecasts of<br />
                specific <b>political violence</b> event types across<br />
                the world six months into the future - at the<br />
                national and sub-national level. Results for
              </InfoBody>
            </InfoBox>
          </FilterPanel>
        </Column>
        <Column>
          <LegendBar>
            {LEGEND.map(([c, a, b]) => (
              <LegendCell key={c} $bg={c}><div>{a}<br />{b}</div></LegendCell>
            ))}
          </LegendBar>
          <MapBox>
            <WorldMap />
            <ZoomControl>
              <ZoomBtn>+</ZoomBtn>
              <ZoomBtn>−</ZoomBtn>
            </ZoomControl>
            {MAP_LABELS.map((m) => (
              <MapLabel key={m.x} $x={m.x} $y={m.y} $ocean={m.ocean}>
                {m.t.map((l) => <div key={l}>{l}</div>)}
              </MapLabel>
            ))}
          </MapBox>
          <TabBar $h={83}>
            <Tab $active $w={162}>Forecast</Tab>
            <Tab $w={406}>What's Driving the Forecasts?</Tab>
            <Tab $w={194}>Learn More</Tab>
          </TabBar>
          <Chart />
        </Column>
        <Column>
          <TableTitle>
            Forecasted Events (All Event Types) for March 2023<br />
            Relative to 12-Month Average
          </TableTitle>
          <TableBox>
            <GridRow $h={45}>
              <HeadTh>Country</HeadTh>
              <HeadTh>Forecast</HeadTh>
              <HeadTh>Average</HeadTh>
              <HeadTh>Predicted Change</HeadTh>
            </GridRow>
            <GridRow $h={68}>
              {[0, 1, 2, 3].map((i) => (
                <FilterCell key={i}><FilterInput placeholder="Filter..." readOnly /></FilterCell>
              ))}
            </GridRow>
            {ROWS.map(([name, f, a, ch, col]) => {
              const label = `${ch >= 0 ? "+" : "-"}${Math.abs(ch)}%`;
              const side = (
                <>
                  <ChangeText $right={ch >= 0}>{label}</ChangeText>
                  {col && <ChangeBar $c={col} style={{ width: Math.abs(ch) * 1.93 }} />}
                </>
              );
              return (
                <GridRow key={name} $h={56.6}>
                  <Td>{name}</Td>
                  <Td>{f}</Td>
                  <Td>{a}</Td>
                  <ChangeCell>
                    <ChangeSide>{ch < 0 && side}</ChangeSide>
                    <ChangeSide $right>{ch >= 0 && side}</ChangeSide>
                  </ChangeCell>
                </GridRow>
              );
            })}
          </TableBox>
        </Column>
      </Main>
    </Page>
  );
}
